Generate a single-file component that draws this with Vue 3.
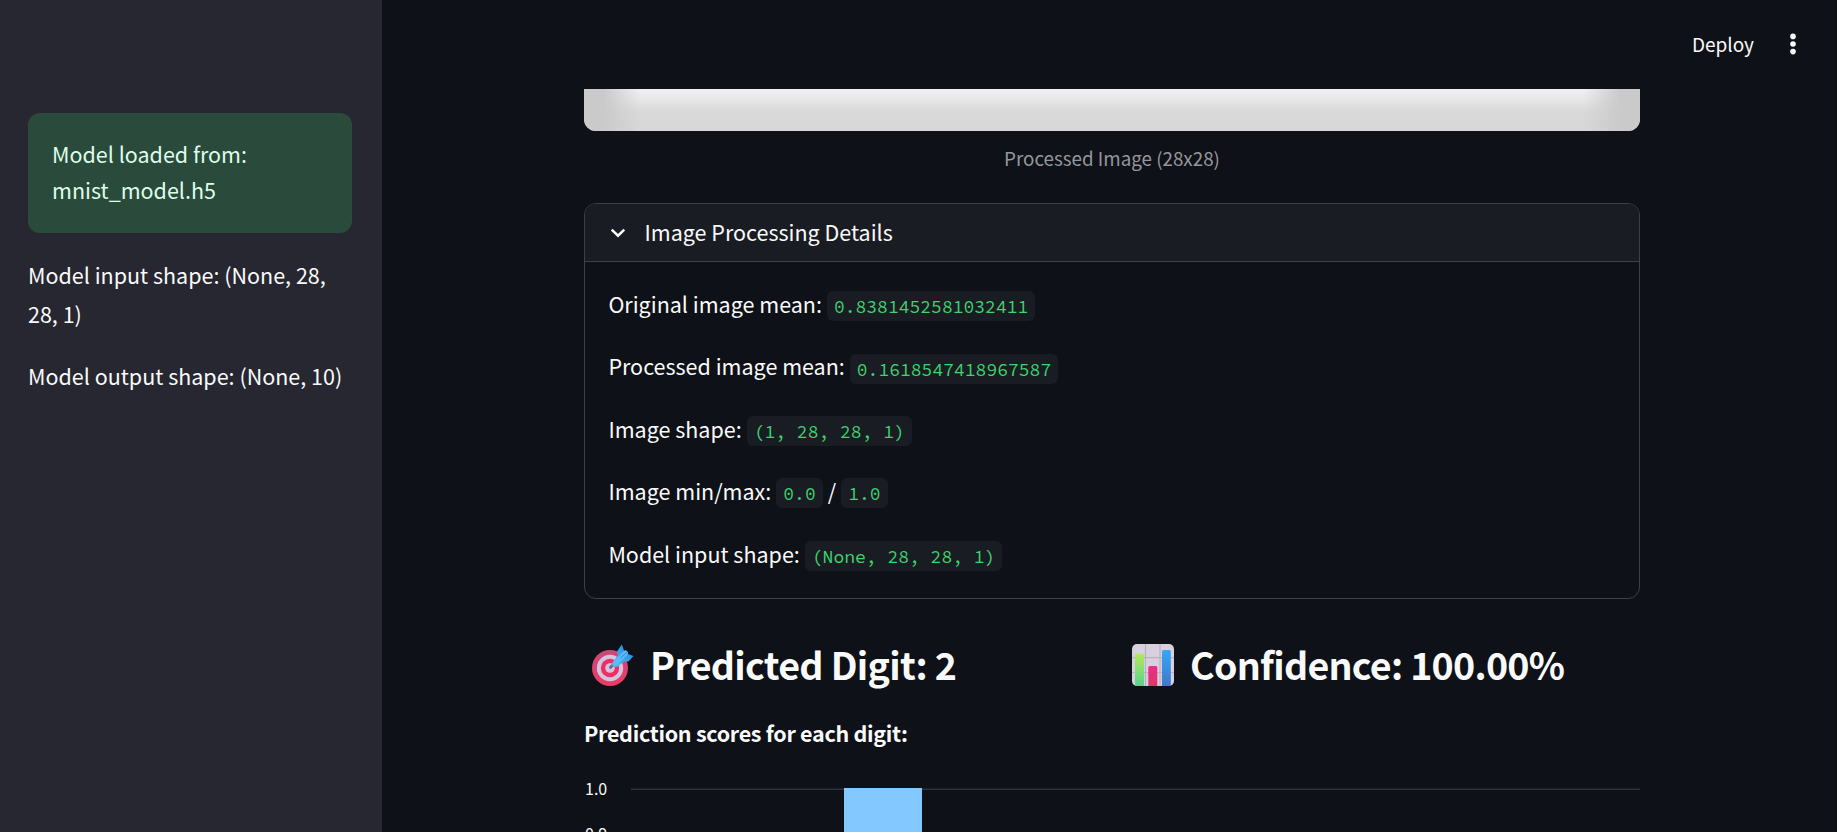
<script setup>
const rows = [
  { label: 'Original image mean:', values: ['0.8381452581032411'] },
  { label: 'Processed image mean:', values: ['0.1618547418967587'] },
  { label: 'Image shape:', values: ['(1, 28, 28, 1)'] },
  { label: 'Image min/max:', values: ['0.0', '1.0'] },
  { label: 'Model input shape:', values: ['(None, 28, 28, 1)'] },
]
</script>

<template>
  <div class="app">
    <aside class="sidebar">
      <div class="alert">Model loaded from:<br />mnist_model.h5</div>
      <p>Model input shape: (None, 28, 28, 1)</p>
      <p>Model output shape: (None, 10)</p>
    </aside>

    <div class="page">
      <header class="toolbar">
        <span class="deploy">Deploy</span>
        <svg class="menu" width="6" height="22" viewBox="0 0 6 22">
          <circle cx="3" cy="3.4" r="2.8" /><circle cx="3" cy="11" r="2.8" /><circle cx="3" cy="18.6" r="2.8" />
        </svg>
      </header>

      <main class="content">
        <div class="processed"><i class="edge left"></i><i class="edge right"></i></div>
        <div class="caption"><span>Processed Image (28x28)</span></div>

        <section class="expander">
          <div class="summary">
            <svg class="chevron" width="16" height="10" viewBox="0 0 16 10">
              <path d="M1.7 1.6 8 7.7 14.3 1.6" fill="none" stroke="#fafafa" stroke-width="2.5" />
            </svg>
            <span>Image Processing Details</span>
          </div>
          <div class="details">
            <p v-for="row in rows" :key="row.label">
              <span class="label">{{ row.label }}</span>
              <template v-for="(v, i) in row.values" :key="v">
                <span v-if="i" class="slash">/</span>
                <code>{{ v }}</code>
              </template>
            </p>
          </div>
        </section>

        <div class="results">
          <h2>
            <svg class="emoji" width="44" height="44" viewBox="0 0 44 44">
              <defs>
                <linearGradient id="red" x1="0" y1="0" x2="0" y2="1">
                  <stop offset="0" stop-color="#c94a77" /><stop offset="1" stop-color="#ee3a66" />
                </linearGradient>
                <linearGradient id="dart" x1="1" y1="0" x2="0" y2="1">
                  <stop offset="0" stop-color="#2383e0" /><stop offset="1" stop-color="#55bdf2" />
                </linearGradient>
              </defs>
              <circle cx="19" cy="25" r="18" fill="url(#red)" />
              <circle cx="19" cy="25" r="13.2" fill="#d3c5e1" />
              <circle cx="19" cy="25" r="9.2" fill="#ee2f63" />
              <circle cx="19" cy="25" r="4.8" fill="#d3c5e1" />
              <path d="M19.5 24.3 24 20" stroke="#756b87" stroke-width="3" stroke-linecap="round" />
              <path d="M22 18.5 27 12.5 26 8.5 30.8 1.5 33.2 8 34.5 8.8 37 11 42.5 13 37.5 18.5 33 18.5 27 23.2Q23.5 24.8 21.5 22.5Q20.5 20.5 22 18.5Z" fill="url(#dart)" />
              <path d="M24.8 19.8 34.5 10" stroke="#58bdf8" stroke-width="5" stroke-linecap="round" />
              <path d="m29.5 15 6.2-5.8" stroke="#2283de" stroke-width="1" />
            </svg>
            <span>Predicted Digit: 2</span>
          </h2>
          <h2>
            <svg class="emoji" width="44" height="44" viewBox="0 0 44 44">
              <defs>
                <linearGradient id="green" x1="0" y1="0" x2="0" y2="1">
                  <stop offset="0" stop-color="#b6e95c" /><stop offset="1" stop-color="#52d58d" />
                </linearGradient>
                <linearGradient id="pink" x1="0" y1="0" x2="0" y2="1">
                  <stop offset="0" stop-color="#ed2c88" /><stop offset="1" stop-color="#dc3868" />
                </linearGradient>
                <linearGradient id="blue" x1="0" y1="0" x2="0" y2="1">
                  <stop offset="0" stop-color="#35a7f6" /><stop offset="1" stop-color="#4077cc" />
                </linearGradient>
              </defs>
              <rect x="1" y="1" width="42" height="42" rx="5" fill="#d8d0df" />
              <path d="M14.5 1v42M29 1v42M1 14.6h42M1 29.5h42" stroke="#b9b1c0" stroke-width="1.2" />
              <path d="M4 43V12q0-1.5 1.5-1.5h6q1.5 0 1.5 1.5v31Z" fill="url(#green)" />
              <path d="M17.3 43V24.5q0-1.5 1.5-1.5h6q1.5 0 1.5 1.5V43Z" fill="url(#pink)" />
              <path d="M31 43V8.5q0-1.5 1.5-1.5h5.8q1.5 0 1.5 1.5V43Z" fill="url(#blue)" />
            </svg>
            <span class="confidence">Confidence: 100.00%</span>
          </h2>
        </div>

        <p class="scores"><strong>Prediction scores for each digit:</strong></p>

        <div class="chart">
          <div class="axis"><span>1.0</span><span>0.9</span></div>
          <div class="plot"><div class="bar"></div></div>
        </div>
      </main>
    </div>
  </div>
</template>

<style>
body { background: #0e1117; overflow: hidden; }
</style>

<style scoped>
.app {
  display: flex;
  width: 1837px;
  height: 832px;
  overflow: hidden;
  background: #0e1117;
  color: #fafafa;
  font-family: "Source Sans Pro", "Noto Sans CJK SC", sans-serif;
  font-size: 21.5px;
  line-height: 38.4px;
}
p, h2 { margin: 0; }
.sidebar {
  box-sizing: border-box;
  width: 382px;
  flex: none;
  padding: 113px 28px 0;
  background: #262730;
}
.alert {
  box-sizing: border-box;
  width: 324px;
  height: 120px;
  padding: 23px 24px;
  margin-bottom: 22px;
  border-radius: 12px;
  background: #2a4b3c;
  color: #dffde9;
  line-height: 36px;
}
.sidebar p { width: 324px; margin-bottom: 23px; line-height: 39px; }
.page { flex: 1; min-width: 0; }
.toolbar {
  display: flex;
  align-items: center;
  justify-content: flex-end;
  height: 89px;
  padding: 0 41px 1px 0;
  gap: 36px;
  box-sizing: border-box;
}
.deploy { font-size: 19px; }
.menu { fill: #fafafa; }
.content { width: 1056px; margin-left: 202px; }
.processed {
  display: flex;
  justify-content: space-between;
  height: 42px;
  border-radius: 0 0 12px 12px;
  overflow: hidden;
  background: linear-gradient(#f1f1f1, #d9d9d9 55%, #d7d7d7);
}
.edge { width: 56px; background: linear-gradient(90deg, #cacaca 35%, transparent); }
.edge.right { background: linear-gradient(270deg, #cacaca 35%, transparent); }
.caption {
  height: 72px;
  padding-top: 10px;
  box-sizing: border-box;
  text-align: center;
  font-size: 18.8px;
  line-height: 34px;
  color: #96979a;
}
.expander {
  box-sizing: border-box;
  height: 396px;
  border: 1px solid #3d4044;
  border-radius: 12px;
  overflow: hidden;
}
.summary {
  display: flex;
  align-items: center;
  height: 57px;
  padding-left: 24.5px;
  gap: 19px;
  background: #1a1c24;
  border-bottom: 1px solid #3d4044;
}
.details { padding: 23px 23.4px 0; }
.details p {
  display: flex;
  align-items: center;
  height: 38.4px;
  margin-bottom: 24px;
}
code {
  box-sizing: border-box;
  height: 30px;
  margin-top: 4px;
  margin-left: 5px;
  padding: 0 7px;
  border-radius: 6px;
  background: #1a1c24;
  color: #3dd56d;
  font-family: "Source Code Pro", "Noto Sans Mono CJK SC", "Liberation Mono", monospace;
  font-size: 18px;
  line-height: 31px;
  white-space: pre;
}
.slash { margin-left: 5px; }
.results { display: flex; height: 115px; }
.results h2 {
  display: flex;
  align-items: center;
  width: 540px;
  flex: none;
  height: 131px;
  padding-left: 7px;
  box-sizing: border-box;
  gap: 15px;
  font-size: 37.6px;
  font-weight: 600;
  letter-spacing: -0.68px;
  white-space: nowrap;
}
.results .confidence { letter-spacing: -0.74px; }
.scores { height: 54px; letter-spacing: -0.29px; }
.chart { display: flex; height: 64px; overflow: hidden; }
.axis {
  display: flex;
  flex-direction: column;
  width: 47px;
  height: 90px;
  margin-top: -2px;
  padding-left: 1px;
  box-sizing: border-box;
  font-size: 16px;
  line-height: 45px;
}
.plot { flex: 1; margin-top: 20px; border-top: 1px solid #1b1e27; box-shadow: inset 0 1px #31343f; }
.bar { width: 78px; height: 60px; margin: -1px 0 0 213px; background: #83c9ff; }
</style>
